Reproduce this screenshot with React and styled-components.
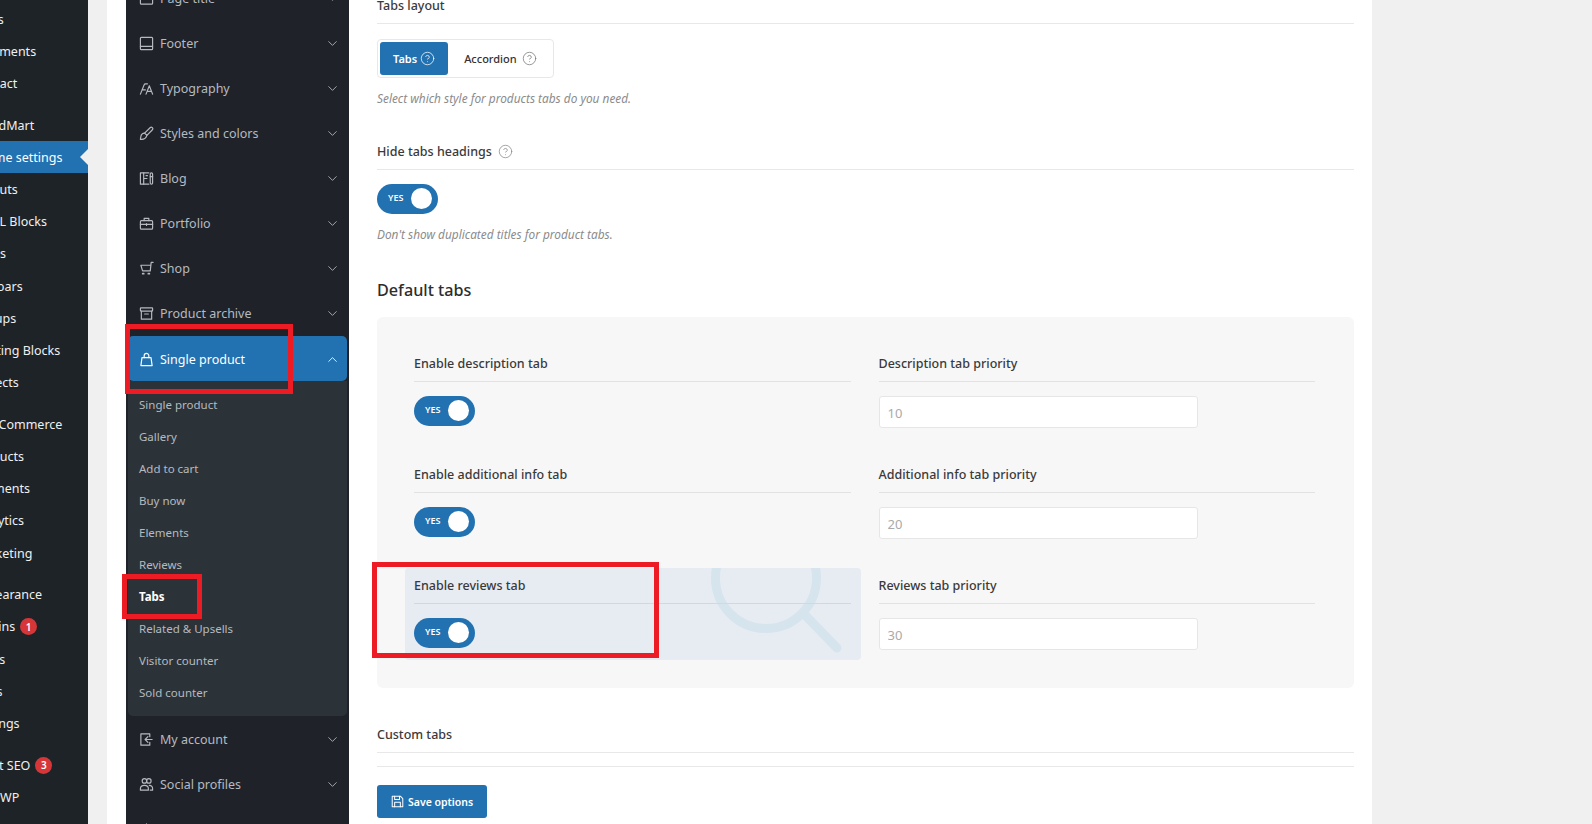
import React from "react";
import styled, { createGlobalStyle } from "styled-components";
import { ChevronDown, ChevronUp, CircleHelp } from "lucide-react";

const FONT = `"Noto Sans", "Open Sans", "Liberation Sans", sans-serif`;

const icons = {
  title: <><rect x="1.5" y="2" width="13" height="12" rx="1" /><path d="M1.5 6h13" /></>,
  footer: <><rect x="1.5" y="1.5" width="13" height="13" rx="1" /><path d="M1.5 11h13" /></>,
  type: <><path d="M1.5 14 5.4 4.2c.3-.8.9-1.2 1.6-1.2H9M3.2 9.5h3.6" /><path d="m7.5 14 3.5-9 3.500 9M8.800 11h4.500" /></>,
  brush: <><path d="M14.2 1.8c-.7-.7-1.7-.6-2.4.1L6 7.6l2.4 2.4 5.7-5.7c.8-.8.8-1.8.1-2.5Z" /><path d="M6 7.6C3.6 7.8 2.2 9.3 2 11.2c-.1 1-.4 2-.5 3 2.7.3 5.9-.6 6.9-4.2" /></>,
  blog: <><path d="M10.5 2H1.5v12h9" /><path d="M5 2v12M5 8h3.5M7.5 5H9" /><rect x="12" y="2" width="2.5" height="12" rx="1.2" /><path d="M12 6h2.5" /></>,
  portfolio: <><rect x="1.5" y="5" width="13" height="9" rx="1" /><path d="M5.5 5V2.5h5V5M1.5 9h13M8 8v2" /></>,
  shop: <><path d="M15 1.5h-2L12 10.500H3.800L2 4.500h10.500" /><path d="M4 13.500h1M10 13.500h1" strokeWidth="2" /></>,
  archive: <><rect x="1.5" y="2" width="13" height="3.5" rx=".6" /><path d="M2.5 5.500V14h11V5.500M6 8.500h4" /></>,
  bag: <><path d="M3.2 6h9.600l1.200 8.500H2Z" /><path d="M5.5 6V4a2.500 2.500 0 0 1 5 0v2" /></>,
  account: <><path d="M11.5 5V2H2v12h9.500v-3" /><path d="M14 8H6.500M9.500 5l-3 3 3 3" /></>,
  social: <><circle cx="5.8" cy="4.2" r="2.4" /><circle cx="10.5" cy="4.2" r="2.4" /><path d="M1.5 14v-1.500c0-2 1.600-3.500 4.300-3.500s4.200 1.500 4.200 3.500V14ZM11 9c2.200.2 3.500 1.500 3.500 3.500V14H12" /></>,
  misc: <><path d="M8 2v12M2 8h12" /></>,
  save: <><path d="M2 1.5h9.500L14.500 4.500v10h-13v-13Z" /><path d="M4.5 1.500v4h6v-4M4.500 14.500V9h7v5.500" /></>,
};

const adminGroups = [
  [{ label: "Posts" }, { label: "Comments" }, { label: "Contact" }],
  [
    { label: "WoodMart" },
    { label: "Theme settings", active: true },
    { label: "Layouts" },
    { label: "HTML Blocks" },
    { label: "Slides" },
    { label: "Sidebars" },
    { label: "Popups" },
    { label: "Floating Blocks" },
    { label: "Projects" },
  ],
  [
    { label: "WooCommerce" },
    { label: "Products" },
    { label: "Payments" },
    { label: "Analytics" },
    { label: "Marketing" },
  ],
  [
    { label: "Appearance" },
    { label: "Plugins", badge: 1 },
    { label: "Users" },
    { label: "Tools" },
    { label: "Settings" },
  ],
  [{ label: "Yoast SEO", badge: 3 }, { label: "Mail WP" }],
];

const sectionsBefore = [
  ["Page title", "title"],
  ["Footer", "footer"],
  ["Typography", "type"],
  ["Styles and colors", "brush"],
  ["Blog", "blog"],
  ["Portfolio", "portfolio"],
  ["Shop", "shop"],
  ["Product archive", "archive"],
];

const sectionsAfter = [
  ["My account", "account"],
  ["Social profiles", "social"],
  ["Import / Export", "misc"],
];

const subItems = [
  "Single product",
  "Gallery",
  "Add to cart",
  "Buy now",
  "Elements",
  "Reviews",
  "Tabs",
  "Related & Upsells",
  "Visitor counter",
  "Sold counter",
];

const tabFields = [
  { toggle: "Enable description tab", priority: "Description tab priority", value: "10" },
  { toggle: "Enable additional info tab", priority: "Additional info tab priority", value: "20" },
  { toggle: "Enable reviews tab", priority: "Reviews tab priority", value: "30", highlighted: true },
];

function Glyph({ name, size = 15 }) {
  return (
    <GlyphSvg width={size} height={size} viewBox="0 0 16 16">
      {icons[name]}
    </GlyphSvg>
  );
}

function Section({ name, icon }) {
  return (
    <SectionRow>
      <Glyph name={icon} />
      <SectionName>{name}</SectionName>
      <ChevronDown size={15} strokeWidth={1.4} />
    </SectionRow>
  );
}

function Toggle() {
  return (
    <ToggleTrack>
      <ToggleText>YES</ToggleText>
      <ToggleKnob />
    </ToggleTrack>
  );
}

export default function App() {
  return (
    <Page>
      <GlobalStyle />
      <AdminMenu>
        {adminGroups.map((group) => (
          <AdminGroup key={group[0].label}>
            {group.map((item) => (
              <AdminItem key={item.label} $active={item.active}>
                <AdminLabel>{item.label}</AdminLabel>
                {item.badge && <Badge>{item.badge}</Badge>}
              </AdminItem>
            ))}
          </AdminGroup>
        ))}
      </AdminMenu>

      <Panel>
        <SettingsNav>
          {sectionsBefore.map(([name, icon]) => (
            <Section key={name} name={name} icon={icon} />
          ))}
          <ActiveSection>
            <Glyph name="bag" />
            <SectionName>Single product</SectionName>
            <ChevronUp size={15} strokeWidth={1.4} />
          </ActiveSection>
          <SubMenu>
            {subItems.map((item) => (
              <SubItem key={item} $current={item === "Tabs"}>
                {item}
              </SubItem>
            ))}
          </SubMenu>
          {sectionsAfter.map(([name, icon]) => (
            <Section key={name} name={name} icon={icon} />
          ))}
        </SettingsNav>

        <Content>
          <FieldLabel>Tabs layout</FieldLabel>
          <Segmented>
            <SegmentButton $selected>
              Tabs <CircleHelp size={15} strokeWidth={1.2} />
            </SegmentButton>
            <SegmentButton>
              Accordion <CircleHelp size={15} strokeWidth={1.2} color="#777" />
            </SegmentButton>
          </Segmented>
          <HelpText>Select which style for products tabs do you need.</HelpText>

          <NextField>
            <FieldLabel>
              Hide tabs headings <CircleHelp size={15} strokeWidth={1.2} color="#888" />
            </FieldLabel>
            <ControlSlot>
              <Toggle />
            </ControlSlot>
            <HelpText>Don't show duplicated titles for product tabs.</HelpText>
          </NextField>

          <GroupTitle>Default tabs</GroupTitle>
          <GroupCard>
            {tabFields.map((field) => (
              <React.Fragment key={field.toggle}>
                <CardCell $highlighted={field.highlighted}>
                  {field.highlighted && (
                    <Watermark width="165" height="92" viewBox="0 0 165 92">
                      <circle cx="70" cy="10" r="50.5" />
                      <path d="M109 47 141 80" />
                    </Watermark>
                  )}
                  <CellLabel $highlighted={field.highlighted}>{field.toggle}</CellLabel>
                  <ControlSlot>
                    <Toggle />
                  </ControlSlot>
                </CardCell>
                <CardCell>
                  <CellLabel>{field.priority}</CellLabel>
                  <PriorityInput readOnly placeholder={field.value} />
                </CardCell>
              </React.Fragment>
            ))}
          </GroupCard>

          <CustomTabs>
            <FieldLabel>Custom tabs</FieldLabel>
          </CustomTabs>
          <EmptyRule />
          <SaveButton>
            <Glyph name="save" size={13} />
            Save options
          </SaveButton>
        </Content>
      </Panel>

      <Callout $x={125} $y={324} $w={168} $h={70} />
      <Callout $x={122} $y={574} $w={80} $h={45} />
      <Callout $x={372} $y={562} $w={287} $h={96} />
    </Page>
  );
}

const GlobalStyle = createGlobalStyle`
  html, body {
    margin: 0;
    height: 824px;
    overflow: hidden;
    background: #f0f0f1;
    font-family: ${FONT};
  }
  * {
    box-sizing: border-box;
  }
`;

const Page = styled.div`
  position: relative;
  display: flex;
  width: 1592px;
  height: 824px;
  overflow: hidden;
`;

const AdminMenu = styled.nav`
  flex: 0 0 88px;
  padding-top: 3px;
  background: #1d2327;
  overflow: hidden;
`;

const AdminGroup = styled.div`
  margin-bottom: 9.5px;
`;

const AdminItem = styled.div`
  position: relative;
  display: flex;
  align-items: center;
  gap: 5px;
  height: 32.2px;
  font-size: 12.5px;
  white-space: nowrap;
  color: ${(p) => (p.$active ? "#fff" : "#f0f0f1")};
  background: ${(p) => (p.$active ? "#2271b1" : "transparent")};

  ${(p) =>
    p.$active &&
    `&::after {
      content: "";
      position: absolute;
      right: 0;
      top: 8px;
      border: 8px solid transparent;
      border-right-color: #f0f0f1;
    }`}
`;

const AdminLabel = styled.span`
  margin-left: -28px;
`;

const Badge = styled.b`
  display: inline-flex;
  align-items: center;
  justify-content: center;
  width: 17px;
  height: 17px;
  border-radius: 50%;
  font-size: 10px;
  font-weight: 600;
  color: #fff;
  background: #d63638;
`;

const Panel = styled.main`
  display: flex;
  align-items: flex-start;
  width: 1265px;
  height: 824px;
  margin-left: 19px;
  padding-left: 19px;
  background: #fff;
`;

const SettingsNav = styled.aside`
  flex: 0 0 223px;
  height: 900px;
  margin-top: -25px;
  padding: 0 2px;
  background: #1f2329;
  color: #b5bac0;
`;

const SectionRow = styled.div`
  display: flex;
  align-items: center;
  height: 45px;
  padding: 1.5px 7px 0 11px;
  font-size: 12.5px;
`;

const ActiveSection = styled(SectionRow)`
  margin-top: 1px;
  border-radius: 5px;
  color: #fff;
  background: #2271b1;
`;

const SectionName = styled.span`
  flex: 1;
  margin-left: 6px;
`;

const GlyphSvg = styled.svg`
  flex: none;
  fill: none;
  stroke: currentColor;
  stroke-width: 1.25;
  stroke-linejoin: round;
  stroke-linecap: round;
`;

const SubMenu = styled.div`
  padding: 7.5px 0;
  border-radius: 0 0 5px 5px;
  background: #2c3338;
`;

const SubItem = styled.div`
  display: flex;
  align-items: center;
  height: 32px;
  padding-left: 11px;
  font-size: 11.5px;
  font-weight: ${(p) => (p.$current ? 700 : 400)};
  color: ${(p) => (p.$current ? "#fff" : "#b5bac0")};
`;

const Content = styled.section`
  flex: none;
  width: 977px;
  margin-top: -12.5px;
  margin-left: 28px;
  color: #333;
`;

const FieldLabel = styled.div`
  display: flex;
  align-items: center;
  gap: 6px;
  height: 36px;
  border-bottom: 1px solid #e8e8e8;
  font-size: 12.5px;
  font-weight: 500;
  color: #3a3a3a;
`;

const Segmented = styled.div`
  display: inline-flex;
  height: 39px;
  margin-top: 15px;
  padding: 2px;
  border: 1px solid #e8e8e8;
  border-radius: 4px;
  vertical-align: top;
`;

const SegmentButton = styled.div`
  display: flex;
  align-items: center;
  gap: ${(p) => (p.$selected ? "3px" : "5px")};
  height: 33px;
  padding: ${(p) => (p.$selected ? "0 13px" : "0 14px 0 16px")};
  border-radius: 3px;
  font-size: 11px;
  font-weight: ${(p) => (p.$selected ? 600 : 500)};
  color: ${(p) => (p.$selected ? "#fff" : "#333")};
  background: ${(p) => (p.$selected ? "#2271b1" : "transparent")};
`;

const HelpText = styled.p`
  margin: 11px 0 0;
  font-size: 11.85px;
  line-height: 18px;
  font-style: italic;
  color: #8b8b8b;
`;

const NextField = styled.div`
  margin-top: 27px;
`;

const ControlSlot = styled.div`
  margin-top: 14px;
`;

const ToggleTrack = styled.div`
  display: flex;
  align-items: center;
  justify-content: space-between;
  width: 61px;
  height: 30px;
  padding: 0 6px 2px 11px;
  border-radius: 15px;
  background: #2271b1;
`;

const ToggleText = styled.span`
  font-size: 9px;
  font-weight: 600;
  color: #fff;
`;

const ToggleKnob = styled.span`
  width: 21px;
  height: 21px;
  margin-top: 2px;
  border-radius: 50%;
  background: #fff;
`;

const GroupTitle = styled.h3`
  height: 24px;
  margin: 35px 0 15px;
  font-size: 16.2px;
  line-height: 24px;
  font-weight: 500;
  color: #2d2d2d;
`;

const GroupCard = styled.div`
  display: grid;
  grid-template-columns: 1fr 1fr;
  gap: 19px 9px;
  padding: 29px 29px 28px 28px;
  border-radius: 6px;
  background: #f7f7f7;
`;

const CardCell = styled.div`
  position: relative;
  height: 92px;
  padding: 0 10px 0 9px;
  overflow: hidden;
  border-radius: 4px;
  background: ${(p) => (p.$highlighted ? "#e7ecf3" : "transparent")};

  > * {
    position: relative;
  }
`;

const Watermark = styled.svg`
  && {
    position: absolute;
  }
  top: 0;
  right: 0;
  fill: none;
  stroke: #d6e4ee;
  stroke-width: 9;
  stroke-linecap: round;
`;

const CellLabel = styled.div`
  display: flex;
  align-items: center;
  height: 36px;
  border-bottom: 1px solid ${(p) => (p.$highlighted ? "#cadbe8" : "#e2e2e2")};
  font-size: 12.5px;
  font-weight: 500;
  color: #3a3a3a;
`;

const PriorityInput = styled.input`
  display: block;
  width: 319px;
  height: 32px;
  margin-top: 14.5px;
  padding: 2px 8px 0;
  border: 1px solid #e6e6e6;
  border-radius: 3px;
  outline: none;
  font-family: ${FONT};
  font-size: 13px;
  background: #fff;

  &::placeholder {
    color: #aaa;
    opacity: 1;
  }
`;

const CustomTabs = styled.div`
  margin-top: 29.5px;
`;

const EmptyRule = styled.div`
  height: 14px;
  border-bottom: 1px solid #e8e8e8;
`;

const SaveButton = styled.button`
  display: flex;
  align-items: center;
  gap: 4px;
  height: 33px;
  margin-top: 18px;
  padding: 0 14px;
  border: none;
  border-radius: 3px;
  font-family: ${FONT};
  font-size: 10.5px;
  font-weight: 600;
  color: #fff;
  background: #2271b1;
`;

const Callout = styled.div`
  position: absolute;
  left: ${(p) => p.$x}px;
  top: ${(p) => p.$y}px;
  width: ${(p) => p.$w}px;
  height: ${(p) => p.$h}px;
  border: 5px solid #ed1c24;
  pointer-events: none;
`;
